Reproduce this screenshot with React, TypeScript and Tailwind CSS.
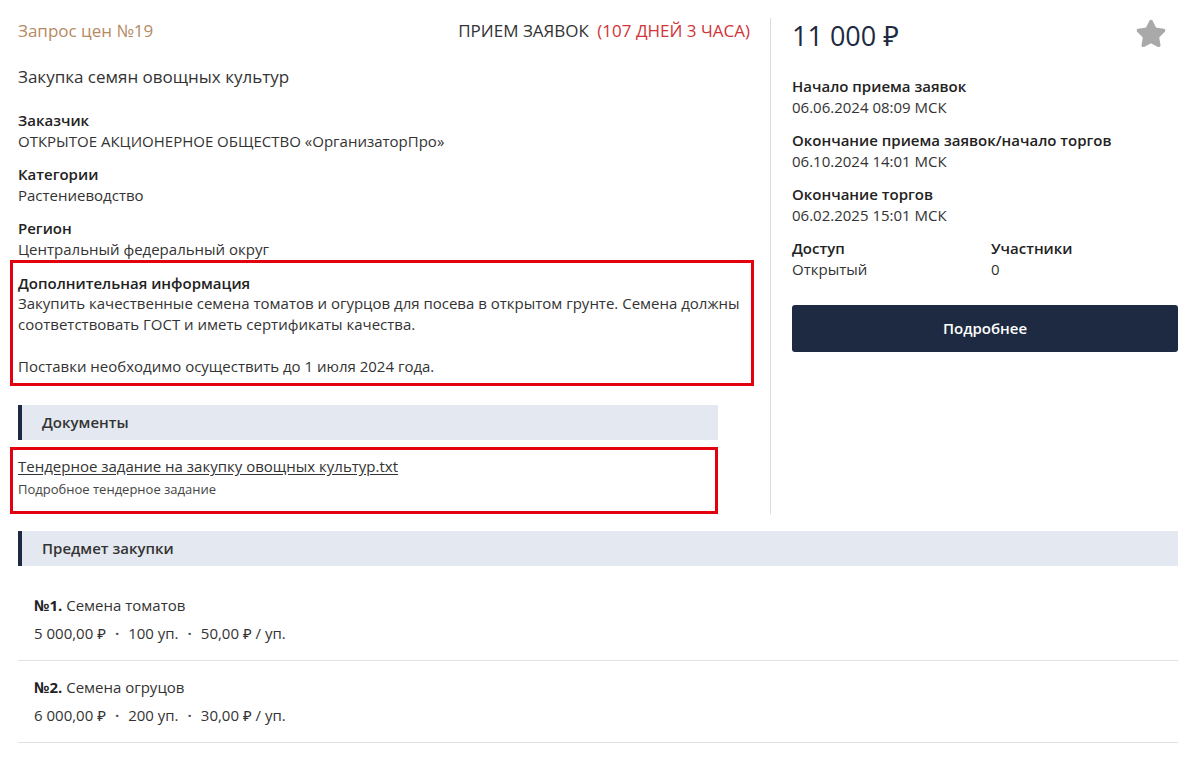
import { Star } from 'lucide-react';

const font = { fontFamily: '"Open Sans", "Noto Sans", sans-serif' };

function Field({ label, value }: { label: string; value: string }) {
  return (
    <div>
      <div className="text-[15px] leading-[21px] font-semibold text-[#222]">{label}</div>
      <div className="text-[15px] leading-[21px] text-[#333]">{value}</div>
    </div>
  );
}

function SectionHeader({ title }: { title: string }) {
  return (
    <div className="flex h-[35px] items-center border-l-4 border-[#1d2a42] bg-[#e4e9f1] pl-[20px] text-[15px] font-semibold text-[#333]">
      {title}
    </div>
  );
}

function Lot({ num, name, sum, qty, price }: { num: string; name: string; sum: string; qty: string; price: string }) {
  return (
    <div className="border-b border-[#e3e3e3] px-4 pt-[16px] pb-[17px] text-[15px] leading-[20px] text-[#333]">
      <div>
        <span className="font-bold text-[#222]">{num}</span> {name}
      </div>
      <div className="mt-[8px] flex items-center gap-[9px]">
        <span>{sum}</span>
        <span className="font-bold text-[#555]">·</span>
        <span>{qty}</span>
        <span className="font-bold text-[#555]">·</span>
        <span>{price}</span>
      </div>
    </div>
  );
}

export default function App() {
  return (
    <div className="min-h-screen bg-white pl-[18px] pr-[11px] pt-[18px]" style={font}>
      {/* верх: описание и карточка */}
      <div className="flex">
        <div className="flex-1 border-r border-[#dcdcdc] pr-[20px]">
          <div className="flex items-center justify-between pt-px text-[17px] leading-[24px]">
            <span className="text-[#b58a64]">Запрос цен №19</span>
            <span className="uppercase text-[#333]">
              Прием заявок <span className="ml-1 text-[#d13438]">(107 дней 3 часа)</span>
            </span>
          </div>
          <div className="mt-[22px] text-[17px] leading-[24px] text-[#333]">Закупка семян овощных культур</div>

          <div className="mt-[21px] flex flex-col gap-[12px]">
            <Field label="Заказчик" value="ОТКРЫТОЕ АКЦИОНЕРНОЕ ОБЩЕСТВО «ОрганизаторПро»" />
            <Field label="Категории" value="Растениеводство" />
            <Field label="Регион" value="Центральный федеральный округ" />
          </div>

          <div className="-ml-[8px] -mr-[4px] border-[3px] border-[#e3000f] pl-[5px] pr-2 pt-[11px] pb-[6px]">
            <div className="text-[15px] leading-[19px] font-semibold text-[#222]">Дополнительная информация</div>
            <div className="text-[15px] leading-[21px] text-[#333]">
              Закупить качественные семена томатов и огурцов для посева в открытом грунте. Семена должны
              соответствовать ГОСТ и иметь сертификаты качества.
              <br />
              <br />
              Поставки необходимо осуществить до 1 июля 2024 года.
            </div>
          </div>

          <div className="mt-[19px] w-[700px]">
            <SectionHeader title="Документы" />
            <div className="-ml-[8px] mt-[7px] border-[3px] border-[#e3000f] pl-[5px] pt-[6px] pb-[13px]">
              <a href="#" className="block text-[15px] leading-[20px] text-[#333] underline underline-offset-2">
                Тендерное задание на закупку овощных культур.txt
              </a>
              <div className="mt-[4px] text-[13px] leading-[18px] text-[#444]">Подробное тендерное задание</div>
            </div>
          </div>
        </div>

        <div className="w-[407px] pl-[21px]">
          <div className="flex items-start justify-between">
            <div className="text-[27px] leading-[36px] text-[#1d2a42]">11 000 ₽</div>
            <Star size={32} className="mr-[11px] text-[#a9a9a9]" fill="currentColor" strokeWidth={1.5} />
          </div>
          <div className="mt-[22px] flex flex-col gap-[12px]">
            <Field label="Начало приема заявок" value="06.06.2024 08:09 МСК" />
            <Field label="Окончание приема заявок/начало торгов" value="06.10.2024 14:01 МСК" />
            <Field label="Окончание торгов" value="06.02.2025 15:01 МСК" />
            <div className="grid grid-cols-[199px_1fr]">
              <Field label="Доступ" value="Открытый" />
              <Field label="Участники" value="0" />
            </div>
          </div>
          <button className="mt-[25px] h-[47px] w-full rounded-[3px] bg-[#1d2a42] text-[15px] font-semibold text-white">
            Подробнее
          </button>
        </div>
      </div>

      {/* предмет закупки */}
      <div className="mt-[17px]">
        <SectionHeader title="Предмет закупки" />
        <div className="pt-[13px]">
          <Lot num="№1." name="Семена томатов" sum="5 000,00 ₽" qty="100 уп." price="50,00 ₽ / уп." />
          <Lot num="№2." name="Семена огруцов" sum="6 000,00 ₽" qty="200 уп." price="30,00 ₽ / уп." />
        </div>
      </div>
    </div>
  );
}
